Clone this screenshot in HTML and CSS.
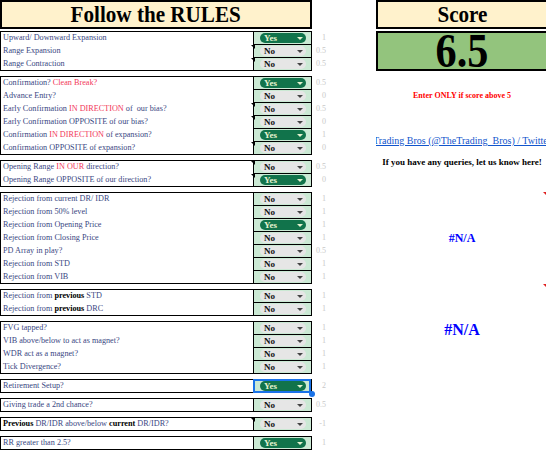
FILE: index.html
```html
<!DOCTYPE html>
<html lang="en">
<head>
    <meta charset="UTF-8">
    <title>Follow the RULES</title>
    <link rel="stylesheet" href="styles.css">
</head>
<body>
<div class="sheet">
    <div class="rules">
        <div class="title"><span class="squeeze">Follow the RULES</span></div>

        <div class="group">
            <div class="box">
                <div class="row"><div class="label">Upward/ Downward Expansion</div><div class="pick"><span class="chip yes">Yes</span></div></div>
                <div class="row"><div class="label noted">Range Expansion</div><div class="pick"><span class="chip">No</span></div></div>
                <div class="row"><div class="label noted">Range Contraction</div><div class="pick"><span class="chip">No</span></div></div>
            </div>
            <div class="points"><span>1</span><span>0.5</span><span>0.5</span></div>
        </div>

        <div class="group">
            <div class="box">
                <div class="row"><div class="label">Confirmation? <span class="hot">Clean Break?</span></div><div class="pick"><span class="chip yes">Yes</span></div></div>
                <div class="row"><div class="label">Advance Entry?</div><div class="pick"><span class="chip">No</span></div></div>
                <div class="row"><div class="label noted">Early Confirmation <span class="hot">IN DIRECTION</span> of&nbsp; our bias?</div><div class="pick"><span class="chip">No</span></div></div>
                <div class="row"><div class="label noted">Early Confirmation OPPOSITE of our bias?</div><div class="pick"><span class="chip">No</span></div></div>
                <div class="row"><div class="label">Confirmation <span class="hot">IN DIRECTION</span> of expansion?</div><div class="pick"><span class="chip yes">Yes</span></div></div>
                <div class="row"><div class="label noted">Confirmation OPPOSITE of expansion?</div><div class="pick"><span class="chip">No</span></div></div>
            </div>
            <div class="points"><span>0.5</span><span>0</span><span>0.5</span><span>0</span><span>1</span><span>0</span></div>
        </div>

        <div class="group">
            <div class="box">
                <div class="row"><div class="label noted">Opening Range <span class="hot">IN OUR</span> direction?</div><div class="pick"><span class="chip">No</span></div></div>
                <div class="row"><div class="label noted">Opening Range OPPOSITE of our direction?</div><div class="pick"><span class="chip yes">Yes</span></div></div>
            </div>
            <div class="points"><span>0.5</span><span>0</span></div>
        </div>

        <div class="group">
            <div class="box">
                <div class="row"><div class="label">Rejection from current DR/ IDR</div><div class="pick"><span class="chip">No</span></div></div>
                <div class="row"><div class="label">Rejection from 50% level</div><div class="pick"><span class="chip">No</span></div></div>
                <div class="row"><div class="label">Rejection from Opening Price</div><div class="pick"><span class="chip yes">Yes</span></div></div>
                <div class="row"><div class="label">Rejection from Closing Price</div><div class="pick"><span class="chip">No</span></div></div>
                <div class="row"><div class="label">PD Array in play?</div><div class="pick"><span class="chip">No</span></div></div>
                <div class="row"><div class="label">Rejection from STD</div><div class="pick"><span class="chip">No</span></div></div>
                <div class="row"><div class="label">Rejection from VIB</div><div class="pick"><span class="chip">No</span></div></div>
            </div>
            <div class="points"><span>1</span><span>1</span><span>1</span><span>1</span><span>0.5</span><span>1</span><span>1</span></div>
        </div>

        <div class="group">
            <div class="box">
                <div class="row"><div class="label">Rejection from <b>previous</b> STD</div><div class="pick"><span class="chip">No</span></div></div>
                <div class="row"><div class="label">Rejection from <b>previous</b> DRC</div><div class="pick"><span class="chip">No</span></div></div>
            </div>
            <div class="points"><span>1</span><span>1</span></div>
        </div>

        <div class="group">
            <div class="box">
                <div class="row"><div class="label">FVG tapped?</div><div class="pick"><span class="chip">No</span></div></div>
                <div class="row"><div class="label">VIB above/below to act as magnet?</div><div class="pick"><span class="chip">No</span></div></div>
                <div class="row"><div class="label">WDR act as a magnet?</div><div class="pick"><span class="chip">No</span></div></div>
                <div class="row"><div class="label">Tick Divergence?</div><div class="pick"><span class="chip">No</span></div></div>
            </div>
            <div class="points"><span>1</span><span>1</span><span>1</span><span>1</span></div>
        </div>

        <div class="group">
            <div class="box">
                <div class="row"><div class="label">Retirement Setup?</div><div class="pick sel"><span class="chip yes">Yes</span></div></div>
            </div>
            <div class="points"><span>2</span></div>
        </div>

        <div class="group">
            <div class="box">
                <div class="row"><div class="label">Giving trade a 2nd chance?</div><div class="pick"><span class="chip">No</span></div></div>
            </div>
            <div class="points"><span>0.5</span></div>
        </div>

        <div class="group">
            <div class="box">
                <div class="row"><div class="label noted"><b>Previous</b> DR/IDR above/below <b>current</b> DR/IDR?</div><div class="pick"><span class="chip">No</span></div></div>
            </div>
            <div class="points"><span>-1</span></div>
        </div>

        <div class="group">
            <div class="box">
                <div class="row"><div class="label">RR greater than 2.5?</div><div class="pick"><span class="chip yes">Yes</span></div></div>
            </div>
            <div class="points"><span>1</span></div>
        </div>
    </div>

    <div class="summary">
        <div class="score-head"><span class="squeeze">Score</span></div>
        <div class="score-value"><span class="squeeze">6.5</span></div>
        <div class="enter">Enter ONLY if score above 5</div>
        <div class="link-line"><a href="#">Trading Bros (@TheTrading_Bros) / Twitter</a></div>
        <div class="ask">If you have any queries, let us know here!</div>
        <div class="na">#N/A</div>
        <div class="na">#N/A</div>
    </div>
</div>
</body>
</html>
```

FILE: styles.css
```css
html, body {
    margin: 0;
    height: 100%;
    background: #fff;
    overflow: hidden;
    font-family: "Liberation Serif", "Times New Roman", serif;
}

.sheet {
    display: flex;
    align-items: flex-start;
}

/* big headings are drawn a little narrow */
.squeeze {
    display: inline-block;
    transform: scaleX(0.88);
}

/* left side: the checklist */
.rules {
    width: 328px;
    flex: none;
    display: flex;
    flex-direction: column;
    gap: 5px;
}

.title {
    width: 312px;
    height: 29px;
    box-sizing: border-box;
    border: 2px solid #000;
    background: #fff2cc;
    margin-bottom: -3px;
    display: flex;
    align-items: center;
    justify-content: center;
    font-size: 24px;
    font-weight: bold;
    line-height: 25px;
}

.group {
    display: flex;
}

.box {
    width: 312px;
    box-sizing: border-box;
    border: 1px solid #000;
}

.row {
    display: flex;
}

.row > div {
    height: 12px;
}

.row + .row > div {
    border-top: 1px solid #000;
}

.row + .row > .label {
    border-top-color: transparent;
}

.label {
    flex: 1;
    position: relative;
    padding-left: 2px;
    font-size: 8.2px;
    line-height: 12px;
    color: #3a4782;
    white-space: nowrap;
}

.label b {
    color: #000;
}

.hot {
    color: #f2385a;
}

/* comment marker in the corner of a cell */
.label.noted::after {
    content: "";
    position: absolute;
    top: 0;
    right: -2px;
    z-index: 1;
    border-top: 4px solid #000;
    border-left: 4px solid transparent;
}

.pick {
    width: 51px;
    padding-left: 6px;
    border-left: 1px solid #000;
    background: #cbe9d4;
    display: flex;
    align-items: center;
}

.pick.sel {
    position: relative;
}

.pick.sel::before {
    content: "";
    position: absolute;
    left: -1px;
    top: -1px;
    right: 0;
    bottom: -1px;
    border: 2px solid #1a73e8;
}

.pick.sel::after {
    content: "";
    position: absolute;
    right: -4px;
    bottom: -5px;
    width: 6px;
    height: 6px;
    border-radius: 50%;
    background: #1a73e8;
}

.chip {
    width: 46px;
    height: 10px;
    box-sizing: border-box;
    padding: 0 3px 0 4px;
    border-radius: 5px;
    background: #e6e6e6;
    color: #111;
    display: flex;
    align-items: center;
    justify-content: space-between;
    font-size: 9px;
    font-weight: bold;
    line-height: 10px;
}

.chip::after {
    content: "";
    border-left: 3px solid transparent;
    border-right: 3px solid transparent;
    border-top: 3px solid #444;
}

.chip.yes {
    background: #11734b;
    color: #e4f2cf;
}

.chip.yes::after {
    border-top-color: #e4f2cf;
}

.points {
    width: 16px;
    padding-top: 1px;
    display: flex;
    flex-direction: column;
    align-items: flex-end;
    font-size: 8px;
    color: #c9c9c9;
}

.points span {
    height: 13px;
    line-height: 12px;
    padding-right: 2px;
}

/* right side: score card */
.summary {
    width: 172px;
    flex: none;
    margin-left: 48px;
    display: flex;
    flex-direction: column;
    text-align: center;
}

.score-head {
    height: 29px;
    box-sizing: border-box;
    border: 2px solid #000;
    background: #fff2cc;
    display: flex;
    align-items: center;
    justify-content: center;
    font-size: 24px;
    font-weight: bold;
    line-height: 25px;
}

.score-value {
    margin-top: 2px;
    height: 40px;
    box-sizing: border-box;
    border: 2px solid #000;
    background: #93c47d;
    display: flex;
    align-items: center;
    justify-content: center;
    font-size: 48px;
    font-weight: bold;
    line-height: 36px;
}

.enter {
    margin-top: 19px;
    font-size: 8px;
    font-weight: bold;
    line-height: 12px;
    color: #f00;
}

.link-line {
    margin-top: 33px;
    line-height: 12px;
    white-space: nowrap;
    overflow: hidden;
    display: flex;
    justify-content: center;
}

.link-line a {
    flex: none;
    font-size: 10px;
    color: #1155cc;
}

.ask {
    margin-top: 9px;
    font-size: 9px;
    font-weight: bold;
    line-height: 12px;
}

.na {
    margin-top: 24px;
    height: 92px;
    position: relative;
    display: flex;
    align-items: center;
    justify-content: center;
    font-size: 12px;
    font-weight: bold;
    color: #00f;
}

.na + .na {
    margin-top: 0;
    font-size: 16px;
}

/* error marker */
.na::after {
    content: "";
    position: absolute;
    top: 0;
    right: 0;
    border-top: 5px solid #e02020;
    border-left: 5px solid transparent;
}
```
